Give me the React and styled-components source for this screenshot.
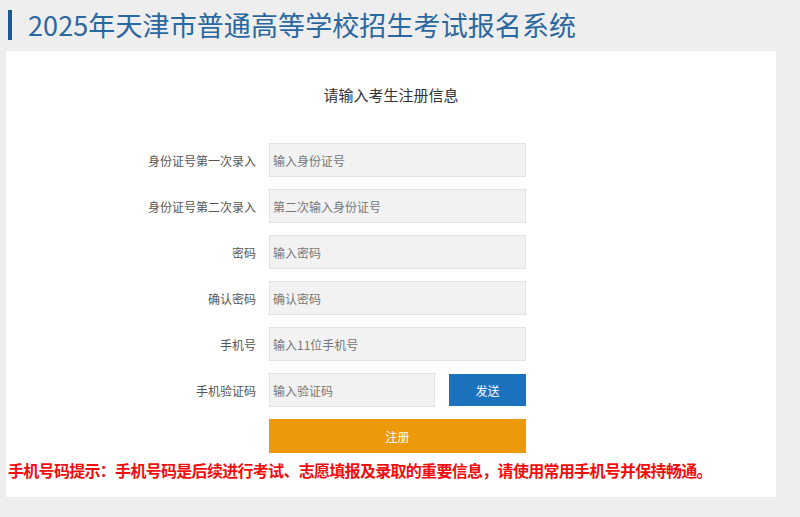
import styled, { createGlobalStyle } from 'styled-components'

const Global = createGlobalStyle`
html, body {
  margin:0;
  padding:0;
  background:#eeeeee;
  font-family:"Noto Sans CJK SC", "Noto Sans", sans-serif;
}
`

const Page = styled.div`
width:800px;
height:517px;
overflow:hidden;
`

const Header = styled.div`
display:flex;
align-items:center;
gap:16px;
padding:10px 0 0 8px;
height:30px;
`

const Bar = styled.div`
width:4px;
height:30px;
background:#1b5a92;
`

const Title = styled.h1`
margin:0;
font-size:27px;
line-height:30px;
font-weight:400;
color:#2c68a0;
letter-spacing:0.1px;
`

const Panel = styled.div`
margin:11px 0 0 6px;
width:770px;
height:446px;
background:#fff;
box-sizing:border-box;
padding-top:34px;
`

const Heading = styled.h2`
margin:0 0 38px;
text-align:center;
font-size:15px;
line-height:20px;
font-weight:400;
color:#333;
`

const Form = styled.div`
display:flex;
flex-direction:column;
gap:12px;
`

const Row = styled.div`
display:flex;
align-items:center;
height:34px;
`

const Label = styled.label`
width:250px;
margin-right:13px;
text-align:right;
font-size:12px;
color:#555;
`

const Input = styled.input`
box-sizing:border-box;
width:${p => p.$w || 257}px;
height:34px;
padding:0 3px;
border:1px solid #e2e2e2;
background:#f2f2f2;
font-family:inherit;
font-size:12px;
color:#333;
outline:none;
&::placeholder{ color:#777; }
`

const Button = styled.button`
box-sizing:border-box;
border:none;
color:#fff;
font-family:inherit;
font-size:12px;
cursor:pointer;
background:${p => p.$orange ? '#ec9a0a' : '#1d72bd'};
width:${p => p.$w}px;
height:${p => p.$h}px;
margin-left:${p => p.$ml || 0}px;
`

const Tip = styled.p`
margin:7px 0 0 2px;
font-size:16px;
line-height:20px;
font-weight:700;
color:#f20d0d;
letter-spacing:-0.7px;
`

const fields = [
  ['身份证号第一次录入', '输入身份证号'],
  ['身份证号第二次录入', '第二次输入身份证号'],
  ['密码', '输入密码'],
  ['确认密码', '确认密码'],
  ['手机号', '输入11位手机号'],
]

export default function App(){
  return(
    <Page>
      <Global />
      <Header>
        <Bar />
        <Title>2025年天津市普通高等学校招生考试报名系统</Title>
      </Header>
      <Panel>
        <Heading>请输入考生注册信息</Heading>
        <Form>
          {fields.map(([label, ph]) => (
            <Row key={label}>
              <Label>{label}</Label>
              <Input placeholder={ph} type={label.includes('密码') ? 'password' : 'text'} />
            </Row>
          ))}
          <Row>
            <Label>手机验证码</Label>
            <Input $w={166} placeholder="输入验证码" />
            <Button $w={77} $h={32} $ml={14}>发送</Button>
          </Row>
          <Row>
            <Label />
            <Button $orange $w={257} $h={34}>注册</Button>
          </Row>
        </Form>
        <Tip>手机号码提示：手机号码是后续进行考试、志愿填报及录取的重要信息，请使用常用手机号并保持畅通。</Tip>
      </Panel>
    </Page>
  )
}
